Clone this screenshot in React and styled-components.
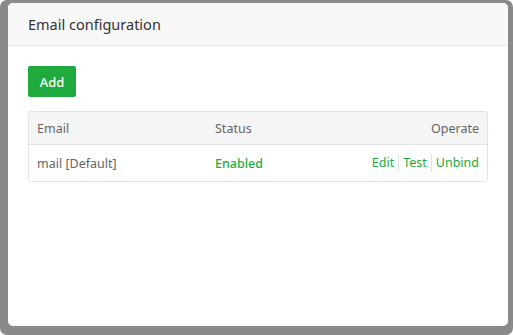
import React from "react";
import styled, { createGlobalStyle } from "styled-components";

const Global = createGlobalStyle`
  html, body { margin: 0; padding: 0; background: #ffffff; }
  body { font-family: "Noto Sans", "Open Sans", Arial, sans-serif; }
  * { box-sizing: border-box; }
`;

const Frame = styled.div`
  width: 513px;
  height: 335px;
  background: #8a8a8a;
  border-radius: 7px;
  padding: 3px 5px 9px 8px;
  display: flex;
`;

const Panel = styled.div`
  flex: 1;
  background: #ffffff;
  border-radius: 5px;
  overflow: hidden;
  display: flex;
  flex-direction: column;
`;

const Header = styled.div`
  height: 43px;
  background: #f8f8f8;
  border-bottom: 1px solid #eaeaea;
  display: flex;
  align-items: center;
  padding-left: 20px;
  font-size: 14.5px;
  color: #333;
`;

const Body = styled.div`
  padding: 20px 20px 0 20px;
  display: flex;
  flex-direction: column;
  align-items: flex-start;
`;

const Button = styled.button`
  height: 31px;
  width: 48px;
  border: none;
  border-radius: 2px;
  background: #1faa3d;
  color: #fff;
  font-family: inherit;
  font-size: 13px;
  font-weight: 500;
  padding: 0;
  cursor: pointer;
`;

const Table = styled.div`
  margin-top: 14px;
  width: 460px;
  border: 1px solid #e2e2e2;
  border-radius: 3px;
  overflow: hidden;
`;

const Row = styled.div`
  display: grid;
  grid-template-columns: 178px 1fr auto;
  align-items: center;
  height: ${(p) => (p.$head ? "33px" : "36px")};
  padding: 0 8px;
  background: ${(p) => (p.$head ? "#f5f5f5" : "#fff")};
  border-bottom: ${(p) => (p.$head ? "1px solid #e2e2e2" : "none")};
  font-size: 12.5px;
  color: #666;
`;

const Cell = styled.div`
  text-align: ${(p) => (p.$right ? "right" : "left")};
  color: ${(p) => (p.$green ? "#1faa3d" : "inherit")};
  font-weight: ${(p) => (p.$bold ? 500 : 400)};
`;

const Ops = styled.div`
  display: flex;
  align-items: center;
`;

const Op = styled.a`
  color: #1faa3d;
  cursor: pointer;
  padding: 0 4px;
  line-height: 18px;
  font-size: 12.5px;
  border-left: 1px solid #e2e2e2;
  &:first-child { border-left: none; }
  &:last-child { padding-right: 0; }
`;

export default function App() {
  return (
    <>
      <Global />
      <Frame>
        <Panel>
          <Header>Email configuration</Header>
          <Body>
            <Button>Add</Button>
            <Table>
              <Row $head>
                <Cell>Email</Cell>
                <Cell>Status</Cell>
                <Cell $right>Operate</Cell>
              </Row>
              <Row>
                <Cell>mail [Default]</Cell>
                <Cell $green $bold>Enabled</Cell>
                <Ops>
                  <Op>Edit</Op>
                  <Op>Test</Op>
                  <Op>Unbind</Op>
                </Ops>
              </Row>
            </Table>
          </Body>
        </Panel>
      </Frame>
    </>
  );
}
